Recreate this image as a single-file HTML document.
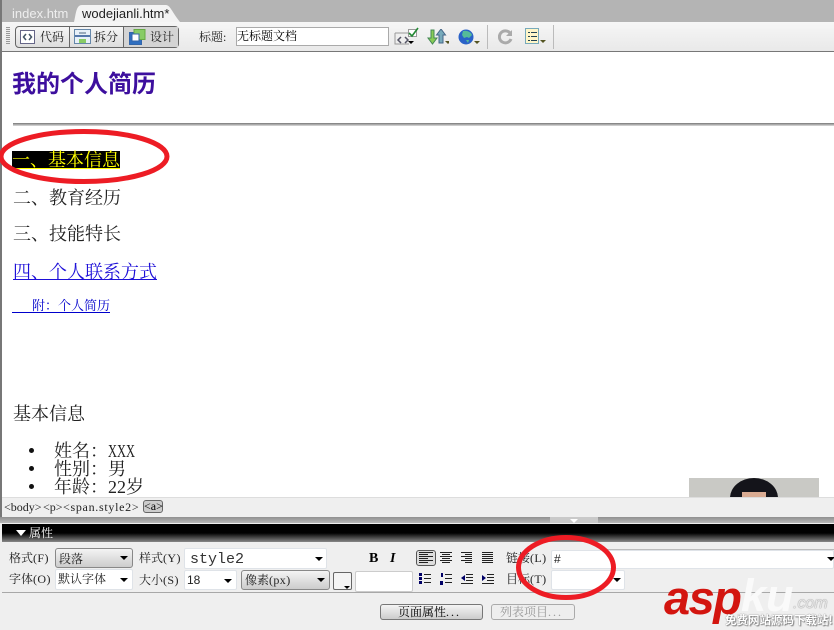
<!DOCTYPE html>
<html lang="zh"><head><meta charset="utf-8"><style>
html,body{margin:0;padding:0}
body{width:834px;height:630px;position:relative;overflow:hidden;background:#efefef;font-family:"Liberation Serif","Noto Serif CJK SC",serif;color:#000}
.a{position:absolute;white-space:nowrap;line-height:1}
.s{font-size:12px;color:#222}
.b{font-size:18px;color:#222}
.m{letter-spacing:.4px}
.x{display:inline-block;width:27px;transform-origin:left center;transform:scaleX(.69)}
.box{position:absolute;background:#fff;border:1px solid #dfe3e8;box-sizing:border-box;border-radius:2px}
.sel{position:absolute;box-sizing:border-box;border:1px solid #888;border-radius:3px;background:linear-gradient(#f4f4f4,#ccc)}
.tri{position:absolute;width:0;height:0;border-left:4px solid transparent;border-right:4px solid transparent;border-top:4px solid #000}
.btn{position:absolute;box-sizing:border-box;top:604px;height:16px;border-radius:3px;background:linear-gradient(#f4f4f4,#ccc);border:1px solid #777;font-size:12px;line-height:14px;white-space:nowrap}
.t{position:absolute;top:501px;font-size:12px;line-height:1;color:#222;white-space:nowrap}
</style></head><body>
<!-- tabs -->
<div class="a" style="left:0;top:0;width:834px;height:22px;background:#b4b4b4"></div>
<div class="a" style="left:0;top:0;width:2px;height:52px;background:#777"></div>
<div class="a" style="left:12px;top:6px;font:13px 'Liberation Sans',sans-serif;color:#eee">index.htm</div>
<svg class="a" style="left:70px;top:4px" width="112" height="18"><path d="M4 18C6 10 6 1 12 1H96C100 1 102 8 110 18Z" fill="#f3f3f3"/></svg>
<div class="a" style="left:82px;top:6px;font:13px 'Liberation Sans',sans-serif;color:#222">wodejianli.htm*</div>
<!-- toolbar -->
<div class="a" style="left:2px;top:22px;width:832px;height:29px;background:linear-gradient(#f6f6f6,#e9e9e9);border-bottom:2px solid #777"></div>
<div class="a" style="left:6px;top:27px;width:4px;height:17px;background:repeating-linear-gradient(#999 0 1px,#eee 1px 2px)"></div>
<div class="a" style="left:15px;top:26px;width:164px;height:22px;box-sizing:border-box;border:1px solid #666;border-radius:4px;background:linear-gradient(#f6f6f6,#ddd)"></div>
<div class="a" style="left:69px;top:27px;width:1px;height:20px;background:#666"></div>
<div class="a" style="left:123px;top:27px;width:1px;height:20px;background:#666"></div>
<div class="a" style="left:124px;top:27px;width:54px;height:20px;background:#d4d4d4"></div>
<svg class="a" style="left:20px;top:29px" width="16" height="16"><rect x=".5" y="1.5" width="14" height="13" fill="#fff" stroke="#668"/><path d="M6 5L3.500 8 6 11M9 5l2.500 3L9 11" fill="none" stroke="#456" stroke-width="1.500"/></svg>
<svg class="a" style="left:74px;top:29px" width="18" height="16"><rect x=".5" y=".5" width="16" height="14" fill="#e8f0f8" stroke="#68a"/><rect x="1" y="6" width="15" height="2" fill="#57a"/><rect x="5" y="10" width="7" height="4" fill="#8c6"/><rect x="5" y="3" width="7" height="2" fill="#9ab"/></svg>
<svg class="a" style="left:129px;top:29px" width="17" height="16"><rect x=".5" y="3.500" width="12" height="12" fill="#2f6fc0" stroke="#36a"/><rect x="5" y=".5" width="11" height="10" fill="#8c6" stroke="#6a4"/><rect x="3" y="5" width="7" height="7" fill="#fff" stroke="#36a"/></svg>
<div class="a s" style="left:40px;top:31px">代码</div>
<div class="a s" style="left:94px;top:31px">拆分</div>
<div class="a s" style="left:150px;top:31px">设计</div>
<div class="a s" style="left:199px;top:31px">标题:</div>
<div class="a" style="left:236px;top:27px;width:153px;height:19px;box-sizing:border-box;background:#fff;border:1px solid #aaa;font-size:12px;line-height:15px;padding-top:1px">无标题文档</div>
<svg class="a" style="left:394px;top:27px" width="26" height="20"><path d="M1 6H15M1 6V17H15" fill="none" stroke="#999"/><path d="M7 10L4 13l3 3M11 10l3 3-3 3" fill="none" stroke="#556" stroke-width="1.500"/><rect x="14.500" y="2.500" width="8" height="7" fill="#fff" stroke="#999"/><path d="M15 6l3 3 6-8" fill="none" stroke="#283" stroke-width="1.600"/><path d="M14 14h6l-3 3z"/></svg>
<svg class="a" style="left:427px;top:29px" width="22" height="16"><path d="M4 1h3v8h3l-4.500 6L1 9h3z" fill="#8c5" stroke="#485"/><path d="M12 6H9.500L14 0l4.500 6H16v8h-4z" fill="#7ab" stroke="#468"/><path d="M18 12h6l-3 3z" fill="#552"/></svg>
<svg class="a" style="left:458px;top:29px" width="22" height="16"><circle cx="8" cy="8" r="7.500" fill="#2a62c8"/><path d="M5 2c4-1 8 1 9 4l-3 3-2-1-3 1-2-3zM8 11l3 0-1 3z" fill="#5b9"/><path d="M16 12h6l-3 3z" fill="#552"/></svg>
<div class="a" style="left:487px;top:25px;width:1px;height:24px;background:#bbb"></div>
<svg class="a" style="left:498px;top:29px" width="16" height="16"><path d="M12 4A6 6 0 1 0 13 10" fill="none" stroke="#aaa" stroke-width="3"/><path d="M14 1v6H8z" fill="#aaa"/></svg>
<svg class="a" style="left:525px;top:28px" width="22" height="18"><rect x=".5" y=".5" width="13" height="15" fill="#fff6c8" stroke="#7ab"/><path d="M3 4.500h2M3 8.500h2M3 12.500h2M6 4.500h6M6 8.500h6M6 12.500h6" stroke="#245"/><path d="M15 12h6l-3 3z" fill="#552"/></svg>
<div class="a" style="left:553px;top:25px;width:1px;height:24px;background:#bbb"></div>
<!-- page -->
<div class="a" style="left:2px;top:52px;width:832px;height:445px;background:#fff"></div>
<div class="a" style="left:0;top:52px;width:2px;height:472px;background:#777"></div>
<div class="a" style="left:12px;top:73px;font-size:24px;font-weight:700;color:#3d0f9e;font-family:'Liberation Sans','Noto Sans CJK SC',sans-serif">我的个人简历</div>
<div class="a" style="left:13px;top:123px;width:821px;height:1px;background:#888"></div>
<div class="a" style="left:13px;top:124px;width:821px;height:1px;background:#aaa"></div>
<div class="a" style="left:13px;top:125px;width:821px;height:1px;background:#ccc"></div>
<div class="a b" style="left:12px;top:151px;height:17px;line-height:18px;background:#000;color:#ff0;border-bottom:1px solid #ff0">一、基本信息</div>
<div class="a b" style="left:13px;top:189px">二、教育经历</div>
<div class="a b" style="left:13px;top:225px">三、技能特长</div>
<div class="a b" style="left:13px;top:263px;color:#1d0fd8;text-decoration:underline">四、个人联系方式</div>
<div class="a" style="left:12px;top:312px;width:98px;height:1px;background:#00c"></div>
<div class="a" style="left:32px;top:299px;font-size:13px;color:#00c">附&#xFF1A;个人简历</div>
<div class="a b" style="left:13px;top:405px">基本信息</div>
<div class="a" style="left:29px;top:448px;width:5px;height:5px;border-radius:50%;background:#111"></div>
<div class="a" style="left:29px;top:466px;width:5px;height:5px;border-radius:50%;background:#111"></div>
<div class="a" style="left:29px;top:484px;width:5px;height:5px;border-radius:50%;background:#111"></div>
<div class="a b" style="left:54px;top:442px">姓名&#xFF1A;<span class="x">XXX</span></div>
<div class="a b" style="left:54px;top:460px">性别&#xFF1A;男</div>
<div class="a b" style="left:54px;top:478px">年龄&#xFF1A;22岁</div>
<!-- photo -->
<div class="a" style="left:689px;top:478px;width:130px;height:19px;background:#c9c9c5;overflow:hidden"><div style="position:absolute;left:41px;top:0;width:48px;height:40px;border-radius:50% 50% 0 0;background:#14141a"></div><div style="position:absolute;left:53px;top:14px;width:24px;height:8px;background:#d9ab92"></div></div>
<!-- tag bar -->
<div class="a" style="left:2px;top:497px;width:832px;height:20px;background:#efefef;border-top:1px solid #ddd"></div>
<div class="t" style="left:4px">&lt;body&gt;</div>
<div class="t" style="left:43px">&lt;p&gt;</div>
<div class="t" style="left:63px;letter-spacing:.7px">&lt;span.style2&gt;</div>
<div class="a" style="left:143px;top:500px;width:20px;height:13px;box-sizing:border-box;background:#ccc;border:1px solid #666;border-radius:3px;font-size:12px;line-height:10px;text-align:center">&lt;a&gt;</div>
<!-- panel header -->
<div class="a" style="left:0;top:517px;width:834px;height:6px;background:linear-gradient(#909090,#b8b8b8)"></div>
<div class="a" style="left:550px;top:517px;width:48px;height:6px;background:#c9c9c9"></div>
<div class="tri" style="left:570px;top:519px;border-top-color:#fff"></div>
<div class="a" style="left:0;top:523px;width:834px;height:1px;background:#eee"></div>
<div class="a" style="left:2px;top:524px;width:832px;height:18px;background:linear-gradient(#000 0,#000 50%,#888 100%)"></div>
<div class="tri" style="left:16px;top:530px;border-left-width:5px;border-right-width:5px;border-top:6px solid #fff"></div>
<div class="a" style="left:29px;top:527px;font-size:12px;color:#fff">属性</div>
<!-- properties -->
<div class="a" style="left:600px;top:549px;width:234px;height:1px;background:#bbb"></div>
<div class="a s" style="left:9px;top:552px">格式<span class="m">(F)</span></div>
<div class="sel" style="left:55px;top:548px;width:78px;height:20px"></div>
<div class="a s" style="left:59px;top:553px">段落</div>
<div class="tri" style="left:120px;top:556px"></div>
<div class="a s" style="left:139px;top:552px">样式<span class="m">(Y)</span></div>
<div class="box" style="left:184px;top:548px;width:143px;height:21px"></div>
<div class="a" style="left:190px;top:552px;font-size:15px;color:#333;font-family:'Liberation Mono',monospace">style2</div>
<div class="tri" style="left:315px;top:557px"></div>
<div class="a s" style="left:9px;top:573px">字体<span class="m">(O)</span></div>
<div class="box" style="left:55px;top:569px;width:78px;height:21px"></div>
<div class="a s" style="left:58px;top:573px">默认字体</div>
<div class="tri" style="left:120px;top:578px"></div>
<div class="a s" style="left:139px;top:574px">大小<span class="m">(S)</span></div>
<div class="box" style="left:184px;top:570px;width:53px;height:20px"></div>
<div class="a s" style="left:187px;top:574px;font-family:'Liberation Sans',sans-serif">18</div>
<div class="tri" style="left:224px;top:579px"></div>
<div class="sel" style="left:241px;top:570px;width:89px;height:20px"></div>
<div class="a s" style="left:245px;top:574px">像素<span class="m">(px)</span></div>
<div class="tri" style="left:317px;top:578px"></div>
<div class="a" style="left:333px;top:572px;width:19px;height:18px;box-sizing:border-box;background:#f4f4f4;border:1px solid #666;border-radius:2px"></div>
<div class="tri" style="left:344px;top:586px;border-left-width:3px;border-right-width:3px;border-top-width:3px"></div>
<div class="box" style="left:355px;top:571px;width:58px;height:21px;border-color:#ccc"></div>
<div class="a" style="left:369px;top:551px;font:900 14px 'Liberation Serif',serif">B</div>
<div class="a" style="left:390px;top:551px;font:italic 700 14px 'Liberation Serif',serif">I</div>
<div class="a" style="left:416px;top:550px;width:20px;height:16px;box-sizing:border-box;background:#ddd;border:1px solid #555;border-radius:3px"></div>
<svg class="a" style="left:419px;top:552px" width="76" height="12" stroke="#222"><path d="M0 .5h14M0 2.500h9M0 4.500h14M0 6.500h9M0 8.500h14M0 10.500h9M21 .5h12M23 2.500h8M21 4.500h12M23 6.500h8M21 8.500h12M23 10.500h8M42 .5h11M46 2.500h7M42 4.500h11M46 6.500h7M42 8.500h11M46 10.500h7M63 .5h11M63 2.500h11M63 4.500h11M63 6.500h11M63 8.500h11M63 10.500h11"/></svg>
<svg class="a" style="left:419px;top:573px" width="76" height="12"><path d="M0 0h3v3H0zM0 4h3v3H0zM0 8h3v3H0z" fill="#006"/><path d="M5 1.500h7M5 5.500h7M5 9.500h7M26 1.500h7M26 5.500h7M26 9.500h7M47 1.500h7M47 4.500h7M47 7.500h7M42 10.500h12M68 1.500h7M68 4.500h7M68 7.500h7M63 10.500h12" stroke="#222"/><path d="M22 0h2v4h-2zM21 8h3v4h-3zM42 5l4-3v6zM67 5l-4-3v6z" fill="#006"/></svg>
<div class="a s" style="left:506px;top:552px">链接<span class="m">(L)</span></div>
<div class="box" style="left:551px;top:550px;width:283px;height:19px"></div>
<div class="a s" style="left:554px;top:553px;font-family:'Liberation Sans',sans-serif">#</div>
<div class="tri" style="left:827px;top:557px"></div>
<div class="a s" style="left:506px;top:573px">目标<span class="m">(T)</span></div>
<div class="box" style="left:551px;top:570px;width:74px;height:20px"></div>
<div class="tri" style="left:613px;top:578px"></div>
<div class="a" style="left:2px;top:592px;width:832px;height:1px;background:#a8a8a8"></div>
<div class="btn" style="left:380px;width:103px;padding-left:17px">页面属性<span style="letter-spacing:2px">...</span></div>
<div class="btn" style="left:491px;width:84px;padding-left:8px;border-color:#aaa;color:#999;background:#eee">列表项目<span style="letter-spacing:2px">...</span></div>
<!-- ellipses -->
<svg class="a" style="left:0;top:0" width="834" height="630" fill="none" stroke="#ed1c24" stroke-width="5"><ellipse cx="84" cy="156.500" rx="83" ry="25"/><ellipse cx="566" cy="567.500" rx="47.500" ry="30"/></svg>
<!-- logo -->
<div class="a" style="left:664px;top:570px;font:italic 700 47px 'Liberation Sans',sans-serif;color:#d3150f;letter-spacing:-1.500px">asp</div>
<div class="a" style="left:741px;top:570px;font:italic 700 45px 'Liberation Sans',sans-serif;color:#fafafa">ku</div>
<div class="a" style="left:793px;top:595px;font:italic 16px 'Liberation Sans',sans-serif;color:#e8e8e8;text-shadow:0 0 1px #555">.com</div>
<div class="a" style="left:725px;top:612px;font:700 11.500px 'Noto Sans CJK SC',sans-serif;color:#fff;text-shadow:0 0 1px #555,1px 1px 1px #888">免费网站源码下载站!</div>
</body></html>
